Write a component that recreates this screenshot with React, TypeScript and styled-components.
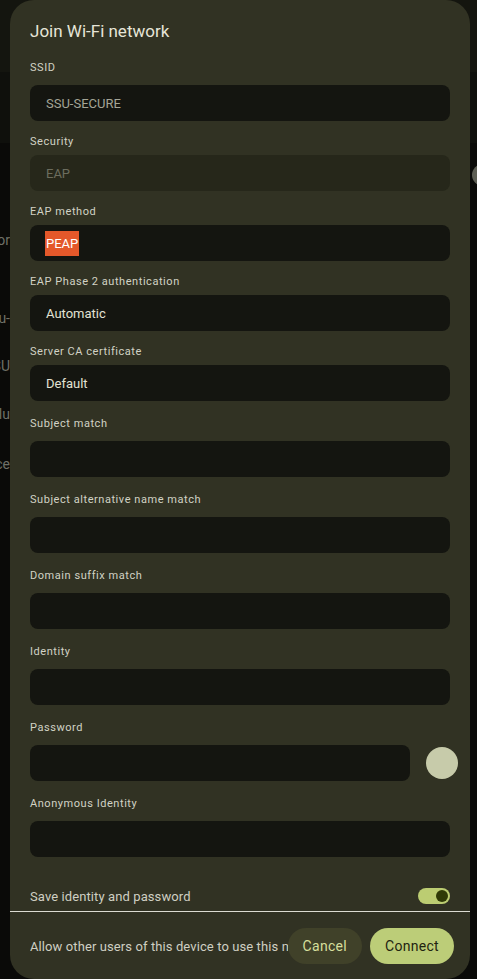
import React from 'react';
import styled, { createGlobalStyle } from 'styled-components';

const GlobalStyle = createGlobalStyle`
  html, body {
    margin: 0;
    padding: 0;
    background: #0a0a08;
    overflow: hidden;
  }
  * {
    box-sizing: border-box;
  }
`;

const Page = styled.div`
  display: grid;
  grid-template-columns: 10px 460px 7px;
  height: 979px;
  font-family: Roboto, 'Noto Sans', sans-serif;
  background: linear-gradient(#14150f 0 72px, #0f100c 72px 143px, #0a0a08 143px);
`;

const Gutter = styled.div<{ $align: 'start' | 'end' }>`
  display: flex;
  flex-direction: column;
  align-items: flex-${({ $align }) => $align};
  overflow: hidden;
`;

const BackText = styled.span<{ $top: number }>`
  margin-top: ${({ $top }) => $top}px;
  font-size: 14px;
  line-height: 18px;
  color: #6f7066;
  white-space: nowrap;
`;

const BackKnob = styled.span`
  margin-top: 164px;
  margin-left: 2px;
  width: 22px;
  height: 22px;
  flex: none;
  border-radius: 50%;
  background: #5d5e54;
`;

const Dialog = styled.div`
  display: flex;
  flex-direction: column;
  height: 979px;
  border-radius: 24px;
  background: #313223;
  overflow: hidden;
`;

const Body = styled.div`
  display: flex;
  flex-direction: column;
  padding: 20px 20px 4px;
`;

const Title = styled.h1`
  margin: 0 0 3px;
  font-size: 17px;
  line-height: 22px;
  font-weight: 400;
  color: #e6e5d8;
`;

const Field = styled.div<{ $kind: 'text' | 'select' }>`
  display: flex;
  flex-direction: column;
  margin-top: ${({ $kind }) => ($kind === 'text' ? 16 : 14)}px;
  gap: ${({ $kind }) => ($kind === 'text' ? 10 : 6)}px;
`;

const Label = styled.label`
  font-size: 11px;
  line-height: 14px;
  font-weight: 400;
  letter-spacing: 0.55px;
  color: #d2d2c5;
`;

const Box = styled.div<{ $disabled?: boolean }>`
  display: flex;
  align-items: center;
  height: 36px;
  padding: 0 16px;
  border-radius: 8px;
  background: ${({ $disabled }) => ($disabled ? '#26271a' : '#141510')};
  font-size: 13px;
  color: #e2e2d4;
`;

const Value = styled.span<{ $tone?: 'muted' | 'dim' }>`
  color: ${({ $tone }) => ($tone === 'muted' ? '#a4a597' : $tone === 'dim' ? '#6c6d5e' : '#e2e2d4')};
`;

const Highlight = styled.span`
  display: inline-block;
  height: 25px;
  line-height: 25px;
  margin-left: -1px;
  padding: 0 1px;
  background: #e4582a;
  color: #ffffff;
`;

const PasswordRow = styled.div`
  display: flex;
  align-items: center;
  gap: 16px;
  margin-right: -8px;

  & > ${Box} {
    flex: 1;
  }
`;

const RevealDot = styled.button`
  width: 32px;
  height: 32px;
  flex: none;
  padding: 0;
  border: none;
  border-radius: 50%;
  background: #c7cbaa;
`;

const SaveRow = styled.div`
  display: flex;
  align-items: center;
  justify-content: space-between;
  height: 22px;
  margin-top: 28px;
  font-size: 13px;
  letter-spacing: 0.1px;
  color: #cfcfc2;
`;

const Toggle = styled.span<{ $on: boolean }>`
  display: flex;
  align-items: center;
  justify-content: ${({ $on }) => ($on ? 'flex-end' : 'flex-start')};
  width: 32px;
  height: 16px;
  padding: 0 2px;
  border-radius: 8px;
  background: #bccd72;

  &::after {
    content: '';
    width: 12px;
    height: 12px;
    border-radius: 50%;
    background: #2f3a07;
  }
`;

const Divider = styled.hr`
  margin: 0;
  border: none;
  height: 1px;
  background: #dcdcd2;
`;

const Footer = styled.div`
  display: flex;
  align-items: center;
  padding: 16px 16px 15px 20px;
`;

const FooterText = styled.span`
  flex: 1;
  min-width: 0;
  overflow: hidden;
  white-space: nowrap;
  font-size: 13px;
  letter-spacing: 0.1px;
  color: #cfcfc2;
`;

const Actions = styled.div`
  display: flex;
  gap: 8px;
`;

const Button = styled.button<{ $primary?: boolean }>`
  height: 36px;
  padding: 0 15px;
  border: none;
  border-radius: 18px;
  font-family: inherit;
  font-size: 14px;
  font-weight: 400;
  letter-spacing: 0.3px;
  background: ${({ $primary }) => ($primary ? '#bccd78' : '#404129')};
  color: ${({ $primary }) => ($primary ? '#1f2410' : '#d6df9c')};
`;

const textFields = ['Subject match', 'Subject alternative name match', 'Domain suffix match', 'Identity'];

export default function App() {
  return (
    <>
      <GlobalStyle />
      <Page>
        <Gutter $align="end">
          <BackText $top={231}>Professor</BackText>
          <BackText $top={60}>ssu-</BackText>
          <BackText $top={30}>SSU</BackText>
          <BackText $top={30}>Valu</BackText>
          <BackText $top={32}>Device</BackText>
        </Gutter>

        <Dialog>
          <Body>
            <Title>Join Wi-Fi network</Title>

            <Field $kind="text">
              <Label>SSID</Label>
              <Box>
                <Value $tone="muted">SSU-SECURE</Value>
              </Box>
            </Field>

            <Field $kind="select">
              <Label>Security</Label>
              <Box $disabled>
                <Value $tone="dim">EAP</Value>
              </Box>
            </Field>

            <Field $kind="select">
              <Label>EAP method</Label>
              <Box>
                <Highlight>PEAP</Highlight>
              </Box>
            </Field>

            <Field $kind="select">
              <Label>EAP Phase 2 authentication</Label>
              <Box>
                <Value>Automatic</Value>
              </Box>
            </Field>

            <Field $kind="select">
              <Label>Server CA certificate</Label>
              <Box>
                <Value>Default</Value>
              </Box>
            </Field>

            {textFields.map((label) => (
              <Field $kind="text" key={label}>
                <Label>{label}</Label>
                <Box />
              </Field>
            ))}

            <Field $kind="text">
              <Label>Password</Label>
              <PasswordRow>
                <Box />
                <RevealDot aria-label="Show password" />
              </PasswordRow>
            </Field>

            <Field $kind="text">
              <Label>Anonymous Identity</Label>
              <Box />
            </Field>

            <SaveRow>
              <span>Save identity and password</span>
              <Toggle $on />
            </SaveRow>
          </Body>

          <Divider />

          <Footer>
            <FooterText>Allow other users of this device to use this network</FooterText>
            <Actions>
              <Button>Cancel</Button>
              <Button $primary>Connect</Button>
            </Actions>
          </Footer>
        </Dialog>

        <Gutter $align="start">
          <BackKnob />
        </Gutter>
      </Page>
    </>
  );
}
